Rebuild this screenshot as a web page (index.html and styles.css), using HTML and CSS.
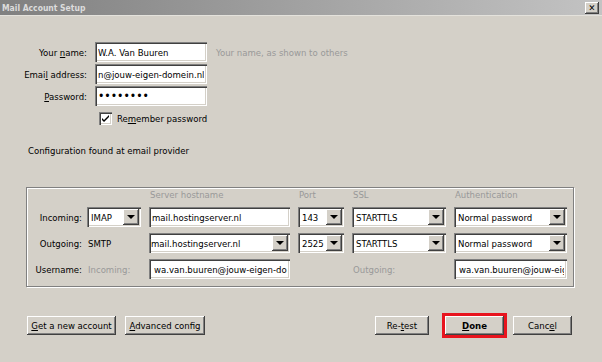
FILE: index.html
```html
<!DOCTYPE html>
<html lang="en">
<head>
    <meta charset="UTF-8">
    <meta name="viewport" content="width=device-width, initial-scale=1.0">
    <title>Mail Account Setup</title>
    <link rel="stylesheet" href="styles.css">
</head>
<body>
    <div class="window">
        <div class="titlebar">
            <span class="title">Mail Account Setup</span>
            <span class="close">&#x2715;</span>
        </div>

        <!-- Identity -->
        <div class="identity">
            <label class="label">Your <u>n</u>ame:</label>
            <input class="field" type="text" value="W.A. Van Buuren">
            <span class="hint">Your name, as shown to others</span>

            <label class="label">Emai<u>l</u> address:</label>
            <input class="field" type="text" value="n@jouw-eigen-domein.nl">
            <span></span>

            <label class="label"><u>P</u>assword:</label>
            <input class="field password" type="password" value="geheim12">
            <span></span>

            <span></span>
            <div class="remember">
                <span class="checkbox">
                    <svg width="9" height="9" viewBox="0 0 9 9"><path d="M1 4 L3 6 L8 1 L8 3 L3 8 L1 6 Z" fill="#000"/></svg>
                </span>
                <span>Re<u>m</u>ember password</span>
            </div>
        </div>

        <p class="status">Configuration found at email provider</p>

        <!-- Server settings -->
        <div class="groupbox">
            <span></span>
            <span></span>
            <span class="head">Server hostname</span>
            <span class="head">Port</span>
            <span class="head">SSL</span>
            <span class="head">Authentication</span>

            <span class="label">Incoming:</span>
            <div class="select"><span class="value">IMAP</span><span class="arrow"></span></div>
            <input class="field" type="text" value="mail.hostingserver.nl">
            <div class="select"><span class="value">143</span><span class="arrow"></span></div>
            <div class="select"><span class="value">STARTTLS</span><span class="arrow"></span></div>
            <div class="select"><span class="value">Normal password</span><span class="arrow"></span></div>

            <span class="label">Outgoing:</span>
            <span class="plain">SMTP</span>
            <div class="select combo"><span class="value">mail.hostingserver.nl</span><span class="arrow"></span></div>
            <div class="select"><span class="value">2525</span><span class="arrow"></span></div>
            <div class="select"><span class="value">STARTTLS</span><span class="arrow"></span></div>
            <div class="select"><span class="value">Normal password</span><span class="arrow"></span></div>

            <span class="label">Username:</span>
            <span class="muted">Incoming:</span>
            <input class="field user" type="text" value="wa.van.buuren@jouw-eigen-domein.nl">
            <span></span>
            <span class="muted">Outgoing:</span>
            <input class="field user" type="text" value="wa.van.buuren@jouw-eigen-domein.nl">
        </div>

        <!-- Buttons -->
        <div class="actions">
            <div class="group">
                <button class="btn new"><u>G</u>et a new account</button>
                <button class="btn advanced"><u>A</u>dvanced config</button>
            </div>
            <div class="group">
                <button class="btn retest">Re-<u>t</u>est</button>
                <button class="btn done"><u>D</u>one</button>
                <button class="btn cancel">Canc<u>e</u>l</button>
            </div>
        </div>
    </div>
</body>
</html>
```

FILE: styles.css
```css
/* General Styles */
body {
    margin: 0;
    font-family: 'DejaVu Sans', 'Liberation Sans', sans-serif;
    font-stretch: condensed;
    font-size: 9.5px;
    color: #000;
    background-color: #d4d0c8;
}

.window {
    width: 602px;
    height: 362px;
    overflow: hidden;
}

u {
    text-decoration-thickness: 1px;
    text-underline-offset: 1px;
}

/* Title bar */
.titlebar {
    height: 15px;
    display: flex;
    align-items: center;
    justify-content: space-between;
    padding: 0 3px 0 2px;
    background: linear-gradient(to right, #808080, #c3c3c3);
    border-bottom: 1px solid #e4e2dc;
}

.title {
    color: #dcdcdc;
    font-weight: bold;
    font-size: 8.5px;
}

.close {
    width: 14px;
    height: 12px;
    font-size: 9px;
    font-weight: bold;
    line-height: 12px;
    text-align: center;
    background-color: #d4d0c8;
    box-shadow: inset -1px -1px #404040, inset 1px 1px #fff, inset -2px -2px #808080;
}

/* Inputs */
.field {
    height: 20px;
    box-sizing: border-box;
    margin: 0;
    padding: 0 3px;
    border: none;
    background-color: #fff;
    font-family: inherit;
    font-stretch: condensed;
    font-size: 9.5px;
    color: #000;
    box-shadow: inset 1px 1px #808080, inset 2px 2px #404040, inset -1px -1px #fff, inset -2px -2px #d4d0c8;
    outline: none;
    min-width: 0;
}

.field.user {
    padding-left: 5px;
}

.password {
    font-size: 12px;
    letter-spacing: 0;
}

.select {
    height: 20px;
    box-sizing: border-box;
    display: flex;
    align-items: center;
    padding: 2px;
    background-color: #fff;
    box-shadow: inset 1px 1px #808080, inset 2px 2px #404040, inset -1px -1px #fff, inset -2px -2px #d4d0c8;
    overflow: hidden;
}

.select .value {
    flex: 1;
    padding-left: 2px;
    white-space: nowrap;
    overflow: hidden;
}

.select.combo .value {
    padding-left: 0;
}

.arrow {
    width: 16px;
    height: 16px;
    flex-shrink: 0;
    position: relative;
    background-color: #d4d0c8;
    box-shadow: inset -1px -1px #404040, inset 1px 1px #fff, inset -2px -2px #808080;
}

.arrow::after {
    content: "";
    position: absolute;
    left: 4px;
    top: 6px;
    border-left: 4px solid transparent;
    border-right: 4px solid transparent;
    border-top: 4px solid #000;
}

/* Identity */
.identity {
    display: grid;
    grid-template-columns: 87px 112px auto;
    grid-auto-rows: 20px;
    column-gap: 8px;
    row-gap: 2px;
    align-items: center;
    padding-top: 26px;
}

.label {
    text-align: right;
    white-space: nowrap;
}

.hint {
    color: #999;
    padding-left: 1px;
}

.remember {
    grid-column: 2 / 4;
    display: flex;
    align-items: center;
    gap: 5px;
    padding-left: 4px;
    white-space: nowrap;
}

.checkbox {
    width: 13px;
    height: 13px;
    box-sizing: border-box;
    display: flex;
    align-items: center;
    justify-content: center;
    background-color: #fff;
    box-shadow: inset 1px 1px #808080, inset 2px 2px #404040, inset -1px -1px #fff, inset -2px -2px #d4d0c8;
}

.status {
    margin: 16px 0 0 28px;
    line-height: 14px;
}

/* Server settings */
.groupbox {
    display: grid;
    grid-template-columns: 52px 54px 141px 46px 94px 113px;
    grid-template-rows: 13px 20px 20px 20px;
    column-gap: 8px;
    row-gap: 6px;
    align-items: center;
    width: 548px;
    box-sizing: border-box;
    margin: 29px 0 0 26px;
    padding: 0 6px 7px 0;
    border: 1px solid #808080;
    box-shadow: inset 1px 1px #fff, 1px 1px #fff;
}

.groupbox .label {
    margin-right: -3px;
}

.head {
    color: #999;
    padding-left: 1px;
    white-space: nowrap;
}

.muted {
    color: #999;
    padding-left: 1px;
}

.plain {
    padding-left: 1px;
}

/* Buttons */
.actions {
    display: flex;
    justify-content: space-between;
    padding: 0 30px 0 27px;
    margin-top: 29px;
}

.group {
    display: flex;
    gap: 9px;
}

.btn {
    height: 19px;
    margin: 0;
    padding: 0 4px 1px;
    border: none;
    font-family: inherit;
    font-stretch: condensed;
    font-size: 9.5px;
    color: #000;
    white-space: nowrap;
    background-color: #d4d0c8;
    box-shadow: inset -1px -1px #404040, inset 1px 1px #fff, inset -2px -2px #808080;
}

.btn.new {
    width: 89px;
}

.btn.advanced {
    width: 80px;
}

.btn.retest {
    width: 54px;
    margin-right: 7px;
}

.btn.done {
    width: 59px;
    font-weight: bold;
    outline: 3px solid #e8141e;
    outline-offset: 0;
}

.btn.cancel {
    width: 59px;
}
```
